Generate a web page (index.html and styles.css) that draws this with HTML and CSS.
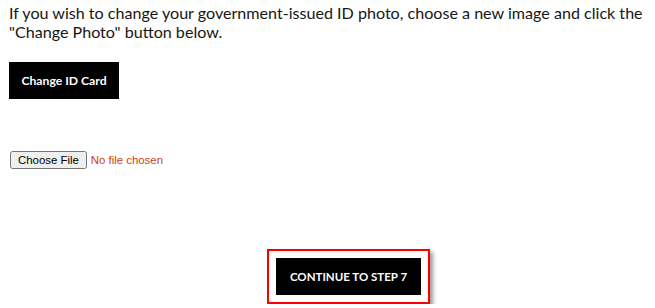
FILE: index.html
```html
<!DOCTYPE html>
<html>
<head>
<meta charset="utf-8">
<link rel="stylesheet" href="styles.css">
</head>
<body>
<div class="page">
  <p class="intro">If you wish to change your government-issued ID photo, choose a new image and click the "Change Photo" button below.</p>
  <button class="btn-dark btn-change">Change ID Card</button>
  <div class="file-row">
    <input type="file" class="file-input">
  </div>
  <div class="continue-wrap">
    <div class="continue-frame">
      <button class="btn-dark btn-continue">CONTINUE TO STEP 7</button>
    </div>
  </div>
</div>
</body>
</html>
```
FILE: styles.css
```css
html, body {
  margin: 0;
  padding: 0;
  background: #ffffff;
}
.page {
  padding: 0 9px;
  font-family: Lato, "Liberation Sans", sans-serif;
  color: #161616;
}
.intro {
  margin: 0;
  padding-top: 3px;
  font-size: 16.1px;
  line-height: 19px;
}
.btn-dark {
  background: #000000;
  color: #ffffff;
  border: none;
  font-family: Lato, "Liberation Sans", sans-serif;
  font-weight: 700;
  cursor: pointer;
}
.btn-change {
  display: block;
  margin-top: 21px;
  width: 110px;
  height: 37px;
  font-size: 12.2px;
  padding: 0;
}
.file-row {
  margin-top: 51px;
  padding-left: 1px;
  line-height: 16px;
}
.file-input {
  font-family: Arial, "Liberation Sans", sans-serif;
  font-size: 11.4px;
  color: #cc3d12;
}
.continue-wrap {
  margin-top: 80px;
  padding-left: 258px;
}
.continue-frame {
  display: inline-block;
  border: 2px solid #ff0000;
  padding: 7px;
  box-shadow: 3px 3px 4px rgba(0,0,0,0.4);
}
.btn-continue {
  display: block;
  width: 145px;
  height: 37px;
  padding: 0;
  font-size: 11.5px;
}
```
